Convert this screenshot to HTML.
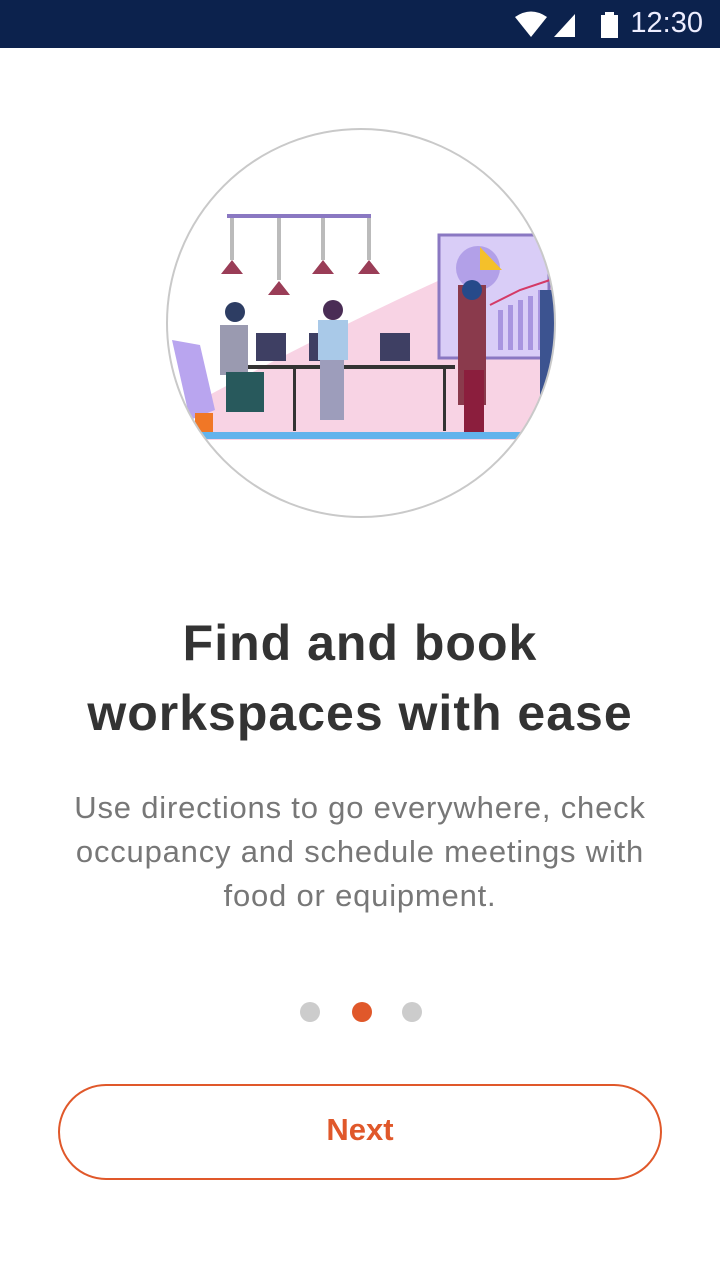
<!DOCTYPE html>
<html><head><meta charset="utf-8"><style>
html,body{margin:0;padding:0;width:720px;height:1280px;background:#fff;overflow:hidden;font-family:"Liberation Sans",sans-serif}
.sb{position:absolute;left:0;top:0;width:720px;height:48px;background:#0c224d;color:#fff}
.time{position:absolute;right:17px;top:7px;font-size:29px;color:#eef}
h1{position:absolute;left:0;top:608px;width:720px;margin:0;text-align:center;font-size:50px;line-height:70px;font-weight:bold;color:#333;letter-spacing:1px}
p{position:absolute;left:0;top:786px;width:720px;margin:0;text-align:center;font-size:31px;line-height:44px;color:#777;white-space:nowrap;letter-spacing:0.8px}
.dot{position:absolute;top:1002px;width:20px;height:20px;border-radius:50%;background:#ccc}
.btn{position:absolute;left:58px;top:1084px;width:600px;height:92px;border:2px solid #e0582a;border-radius:48px;text-align:center;line-height:88px;font-size:31px;font-weight:bold;color:#e0582a}
</style></head><body>
<div class="sb">
<svg style="position:absolute;left:514px;top:10px" width="106" height="28" viewBox="0 0 106 28">
<path d="M1 7 Q17 -4 33 7 L17 27 Z" fill="#fff"/>
<path d="M40 27 L61 4 L61 27 Z" fill="#fff"/>
<rect x="87" y="5" width="17" height="23" fill="#fff"/><rect x="91" y="2" width="9" height="4" fill="#fff"/>
</svg>
<div class="time">12:30</div>
</div>
<svg style="position:absolute;left:0;top:0" width="720" height="560">
<defs><clipPath id="c"><circle cx="361" cy="323" r="194"/></clipPath></defs>
<g clip-path="url(#c)">
<path d="M190 440 L200 400 Q330 330 440 280 L560 240 L560 440 Z" fill="#f8d3e4"/>
<rect x="439" y="235" width="110" height="123" fill="#d9cdf7" stroke="#8a78c2" stroke-width="3"/>
<circle cx="478" cy="268" r="22" fill="#b2a0e8"/><path d="M480 247 L502 270 L480 270Z" fill="#f4c02a"/>
<g fill="#a895e0"><rect x="498" y="310" width="5" height="40"/><rect x="508" y="305" width="5" height="45"/><rect x="518" y="300" width="5" height="50"/><rect x="528" y="296" width="5" height="54"/><rect x="538" y="290" width="5" height="60"/></g>
<path d="M490 305 L520 290 L550 280" stroke="#d43a66" stroke-width="2" fill="none"/>
<rect x="227" y="214" width="144" height="4" fill="#8a78c2"/>
<g fill="#bbb"><rect x="230" y="218" width="4" height="42"/><rect x="277" y="218" width="4" height="62"/><rect x="321" y="218" width="4" height="42"/><rect x="367" y="218" width="4" height="42"/></g>
<g fill="#9a3d57"><path d="M221 274 L232 260 L243 274Z"/><path d="M268 295 L279 281 L290 295Z"/><path d="M312 274 L323 260 L334 274Z"/><path d="M358 274 L369 260 L380 274Z"/></g>
<rect x="225" y="365" width="230" height="4" fill="#333"/>
<g fill="#333"><rect x="293" y="369" width="3" height="62"/><rect x="443" y="369" width="3" height="62"/></g>
<g fill="#3e3f63"><rect x="256" y="333" width="30" height="28"/><rect x="309" y="333" width="30" height="28"/><rect x="380" y="333" width="30" height="28"/></g>
<path d="M172 340 L200 345 L215 410 L190 420 Z" fill="#b9a5ef"/>
<rect x="220" y="325" width="28" height="50" fill="#9a9ab0"/><circle cx="235" cy="312" r="10" fill="#2d3d63"/>
<rect x="226" y="372" width="38" height="40" fill="#28595c"/>
<rect x="318" y="320" width="30" height="40" fill="#a9c9e8"/><circle cx="333" cy="310" r="10" fill="#4a2d55"/>
<rect x="320" y="360" width="24" height="60" fill="#9d9dbb"/>
<rect x="458" y="285" width="28" height="120" fill="#8a3a4c"/><circle cx="472" cy="290" r="10" fill="#264a8a"/>
<rect x="464" y="370" width="20" height="62" fill="#8b1e3d"/>
<rect x="540" y="290" width="14" height="110" fill="#3c5390"/>
<rect x="195" y="413" width="18" height="20" fill="#f07726"/>
<rect x="195" y="432" width="330" height="7" fill="#62b3ec"/>
</g>
<circle cx="361" cy="323" r="194" fill="none" stroke="#c9c9c9" stroke-width="2"/>
</svg>
<h1>Find and book<br>workspaces with ease</h1>
<p>Use directions to go everywhere, check<br>occupancy and schedule meetings with<br>food or equipment.</p>
<div class="dot" style="left:300px"></div>
<div class="dot" style="left:352px;background:#e0582a"></div>
<div class="dot" style="left:402px"></div>
<div class="btn">Next</div>
</body></html>
